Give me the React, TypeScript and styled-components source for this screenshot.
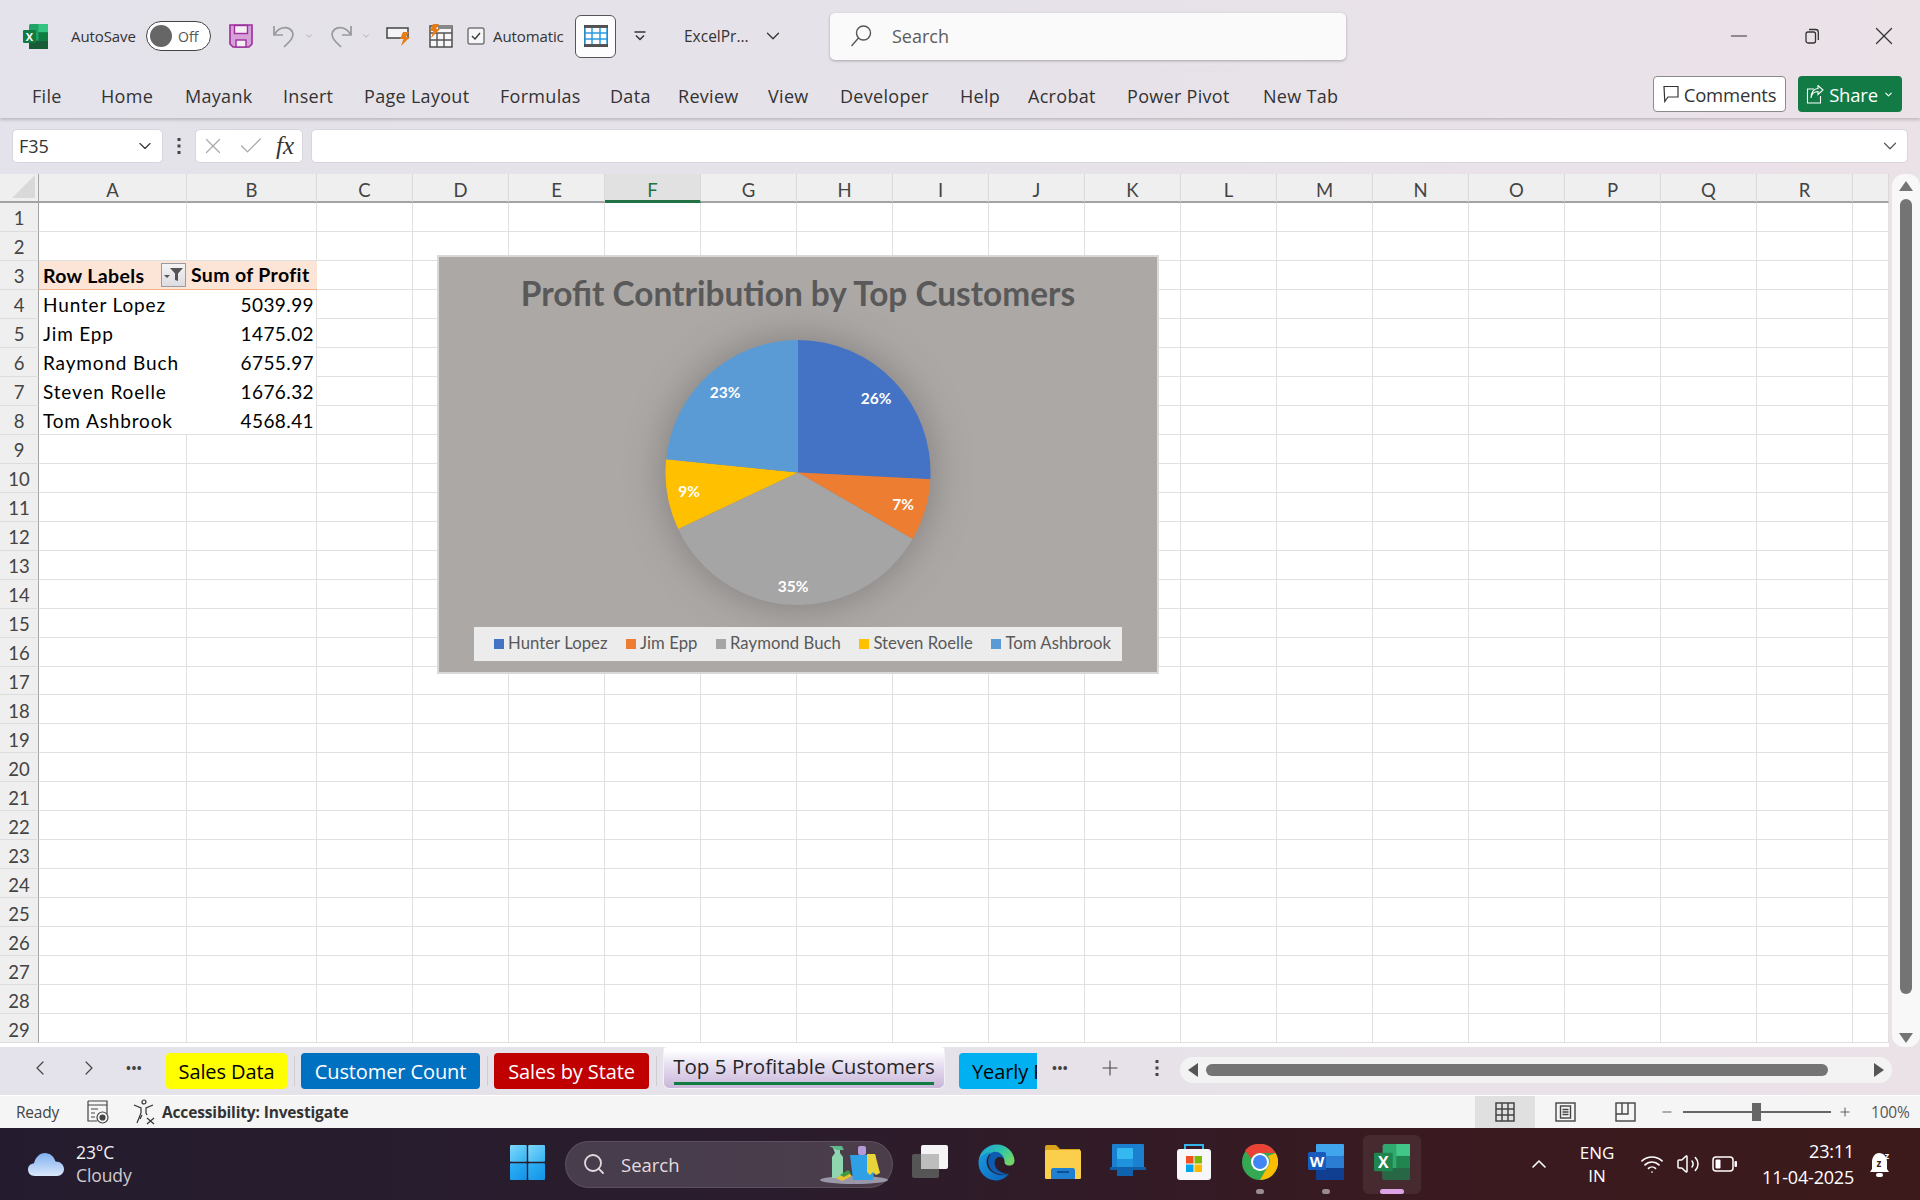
import React from 'react';
import styled, { createGlobalStyle } from 'styled-components';
import { Check, ChevronDown, ChevronLeft, ChevronRight, ChevronUp, Minus, Plus, Search, Volume2, Wifi, X } from 'lucide-react';

const UI_FONT = '"Open Sans", "Liberation Sans", sans-serif';
const CELL_FONT = 'Lato, "Open Sans", sans-serif';

const GlobalStyle = createGlobalStyle`
  html, body { margin: 0; padding: 0; }
  body { font-family: ${UI_FONT}; overflow: hidden; }
  * { box-sizing: border-box; }
`;

const Page = styled.div`
  width: 1920px;
  height: 1200px;
  display: flex;
  flex-direction: column;
  overflow: hidden;
  background: linear-gradient(90deg, #e4e2ea 0%, #e6e2e9 50%, #ebe2e8 100%);
  color: #262626;
`;

/* title bar */
const TitleBar = styled.header`
  height: 72px;
  display: flex;
  align-items: center;
  padding-left: 23px;
`;

const QatLabel = styled.span<{ $w: number; $left: number }>`
  width: ${({ $w }) => $w}px;
  margin-left: ${({ $left }) => $left}px;
  font-size: 15px;
  letter-spacing: -0.1px;
  white-space: nowrap;
  color: #333;
`;

const Toggle = styled.div`
  width: 65px;
  height: 30px;
  margin-left: 9px;
  border: 1.5px solid #444;
  border-radius: 15px;
  background: #fff;
  display: flex;
  align-items: center;
  padding-left: 3px;
  font-size: 14px;
  color: #555;
  gap: 6px;
  &:before {
    content: "";
    width: 22px;
    height: 22px;
    border-radius: 50%;
    background: #666;
  }
`;

const QatIcon = styled.span<{ $left: number }>`
  display: flex;
  margin-left: ${({ $left }) => $left}px;
  flex: none;
`;

const TableButton = styled.div`
  width: 41px;
  height: 43px;
  margin-left: 9px;
  border: 1px solid #555;
  border-radius: 6px;
  background: #fdfdfd;
  display: flex;
  align-items: center;
  justify-content: center;
  flex: none;
`;

const FileName = styled.span`
  width: 78px;
  margin-left: 38px;
  font-size: 15.5px;
  color: #333;
  white-space: nowrap;
`;

const SearchBox = styled.div`
  width: 516px;
  height: 47px;
  margin-left: 46px;
  background: #fafafa;
  border-radius: 5px;
  box-shadow: 0 1px 3px rgba(0, 0, 0, 0.28);
  display: flex;
  align-items: center;
  padding-left: 20px;
  gap: 20px;
  font-size: 18px;
  color: #5c5c5c;
  flex: none;
`;

const WindowControls = styled.div`
  display: flex;
  align-items: center;
  margin-left: auto;
  padding-right: 21px;
  color: #333;
`;

const RestoreSlot = styled.span`
  display: flex;
  margin: 0 49.5px 0 52.5px;
`;

/* ribbon tab row */
const RibbonRow = styled.nav`
  height: 46px;
  display: flex;
  align-items: flex-start;
  padding: 4px 18px 0 32px;
  box-shadow: 0 2px 3px rgba(0, 0, 0, 0.18);
  position: relative;
`;

const RibbonTab = styled.span<{ $w: number }>`
  width: ${({ $w }) => $w}px;
  flex: none;
  font-size: 18px;
  line-height: 40px;
  letter-spacing: 0.3px;
  color: #333;
  white-space: nowrap;
`;

const RibbonActions = styled.div`
  margin-left: auto;
  display: flex;
  gap: 12px;
`;

const CommentsButton = styled.div`
  width: 133px;
  height: 36px;
  background: #fff;
  border: 1px solid #8a8a8a;
  border-radius: 4px;
  display: flex;
  align-items: center;
  justify-content: center;
  gap: 5px;
  font-size: 18.5px;
  letter-spacing: -0.2px;
  color: #333;
`;

const ShareButton = styled.div`
  width: 104px;
  height: 36px;
  background: #117a45;
  border-radius: 4px;
  display: flex;
  align-items: center;
  justify-content: center;
  gap: 5px;
  font-size: 18.5px;
  letter-spacing: -0.2px;
  color: #fff;
`;

/* formula bar */
const FormulaBar = styled.div`
  height: 56px;
  display: flex;
  align-items: flex-start;
  padding: 11px 12px 0 12px;
`;

const FieldBox = styled.div<{ $w?: number }>`
  height: 34px;
  ${({ $w }) => ($w ? `width: ${$w}px; flex: none;` : 'flex: 1;')}
  background: #fff;
  border: 1px solid #d8d6dc;
  border-radius: 5px;
  display: flex;
  align-items: center;
`;

const NameBox = styled(FieldBox)`
  justify-content: space-between;
  padding: 0 7px 0 6px;
  font-size: 18px;
  color: #333;
`;

const FormulaDots = styled.div`
  width: 32px;
  flex: none;
  height: 34px;
  display: flex;
  align-items: center;
  justify-content: center;
  color: #444;
`;

const FormulaButtons = styled(FieldBox)`
  justify-content: space-between;
  padding: 0 8px 0 4px;
  margin-right: 8px;
`;

const FxLabel = styled.i`
  font-family: "Liberation Serif", serif;
  font-size: 25px;
  color: #333;
`;

const FormulaInput = styled(FieldBox)`
  justify-content: flex-end;
  padding-right: 6px;
  color: #555;
`;

/* worksheet */
const SheetArea = styled.div`
  height: 873px;
  display: flex;
`;

const GridWrap = styled.div`
  width: 1889px;
  height: 873px;
  background: #fff;
  position: relative;
  overflow: hidden;
`;

const Grid = styled.div`
  display: grid;
  grid-template-columns: 39px 148px 130px 96px repeat(15, 96px) 1fr;
  grid-template-rows: 29px repeat(29, 28.97px);
`;

const Corner = styled.div`
  background: #efefef;
  border-bottom: 2px solid #a3a3a3;
  border-right: 1px solid #a3a3a3;
  position: relative;
  &:after {
    content: "";
    position: absolute;
    right: 3px;
    bottom: 3px;
    border-style: solid;
    border-width: 0 0 23px 23px;
    border-color: transparent transparent #d9d9d9 transparent;
  }
`;

const ColHeader = styled.div<{ $active?: boolean }>`
  background: ${({ $active }) => ($active ? '#e1e1e1' : '#efefef')};
  border-right: 1px solid #d9d9d9;
  border-bottom: ${({ $active }) => ($active ? '3px solid #217346' : '2px solid #a3a3a3')};
  font-family: ${CELL_FONT};
  font-size: 18.5px;
  color: ${({ $active }) => ($active ? '#217346' : '#444')};
  display: flex;
  align-items: center;
  justify-content: center;
  padding-top: ${({ $active }) => ($active ? 5 : 4)}px;
`;

const RowHeader = styled.div`
  background: #efefef;
  border-right: 1px solid #a3a3a3;
  border-bottom: 1px solid #dcdcdc;
  font-family: ${CELL_FONT};
  font-size: 18.5px;
  color: #444;
  display: flex;
  align-items: center;
  justify-content: center;
  padding-top: 3px;
`;

const Cell = styled.div`
  border-right: 1px solid #e0e0e0;
  border-bottom: 1px solid #e0e0e0;
`;

const PivotHead = styled.div`
  background: #fce4d6;
  border-bottom: 1px solid #f4b084;
  font-family: ${CELL_FONT};
  font-weight: 700;
  font-size: 19.5px;
  letter-spacing: 0.35px;
  color: #000;
  display: flex;
  align-items: center;
  justify-content: space-between;
  padding-left: 4px;
  white-space: nowrap;
`;

const PivotLabelHead = styled.span`
  padding-top: 1px;
`;

const FilterButton = styled.span`
  width: 25px;
  height: 24px;
  margin-right: 1px;
  border: 1px solid #9a9aa2;
  background: linear-gradient(#f4f4f6, #dcdce2);
  display: flex;
  align-items: center;
  justify-content: center;
`;

const PivotLabel = styled.div<{ $last?: boolean }>`
  font-family: ${CELL_FONT};
  font-size: 19px;
  letter-spacing: 0.85px;
  color: #000;
  padding: 1px 0 0 4px;
  display: flex;
  align-items: center;
  white-space: nowrap;
  ${({ $last }) => ($last ? 'border-bottom: 1px solid #e0e0e0;' : '')}
`;

const PivotValue = styled(PivotLabel)`
  justify-content: flex-end;
  padding: 1px 2px 0 0;
  letter-spacing: 0.4px;
  border-right: 1px solid #e0e0e0;
`;

/* chart floats over the cells */
const Chart = styled.section`
  position: absolute;
  left: 437px;
  top: 81px;
  width: 722px;
  height: 419px;
  border: 2px solid #d9d9d9;
  background: #aca8a6;
  display: flex;
  flex-direction: column;
  align-items: center;
`;

const ChartTitle = styled.h2`
  margin: 0;
  height: 72px;
  line-height: 72px;
  font-family: ${CELL_FONT};
  font-weight: 700;
  font-size: 33.4px;
  color: #595959;
  white-space: nowrap;
`;

const PieLabel = styled.text`
  font-family: ${CELL_FONT};
  font-weight: 700;
  font-size: 15.5px;
  fill: #fff;
  text-anchor: middle;
  dominant-baseline: central;
`;

const PieGroup = styled.g`
  filter: drop-shadow(0 0 20px rgba(0, 0, 0, 0.26));
`;

const Legend = styled.div`
  width: 648px;
  height: 34px;
  flex: none;
  background: #ececec;
  display: flex;
  align-items: center;
  padding: 0 0 3px 20px;
  gap: 18.5px;
  font-family: ${CELL_FONT};
  font-size: 16.7px;
  letter-spacing: 0.05px;
  color: #595959;
`;

const LegendItem = styled.span<{ $color: string }>`
  display: flex;
  align-items: center;
  gap: 4px;
  white-space: nowrap;
  &:before {
    content: "";
    width: 10px;
    height: 10px;
    margin-top: 3px;
    background: ${({ $color }) => $color};
  }
`;

/* vertical scroll bar */
const VScroll = styled.div`
  width: 28px;
  margin-left: 3px;
  display: flex;
  flex-direction: column;
  align-items: center;
  background: #f8f8f8;
  border-radius: 12px;
  padding: 7px 1px 4px 0;
`;

const VThumb = styled.div`
  width: 12px;
  height: 795px;
  margin-top: 8px;
  background: #747474;
  border-radius: 6px;
`;

const VArrow = styled.div<{ $down?: boolean }>`
  width: 0;
  height: 0;
  border-left: 7px solid transparent;
  border-right: 7px solid transparent;
  ${({ $down }) => ($down ? 'border-top: 10px solid #747474; margin-top: auto;' : 'border-bottom: 10px solid #747474;')}
`;

/* sheet tabs */
const TabBar = styled.div`
  height: 48px;
  display: flex;
  align-items: flex-start;
`;

const TabNav = styled.div`
  width: 166px;
  flex: none;
  height: 42px;
  display: flex;
  align-items: center;
  padding-left: 28px;
  color: #444;
`;

const NavDots = styled.span`
  font-size: 13px;
  font-weight: 700;
  letter-spacing: 0.5px;
  color: #444;
`;

const SheetTab = styled.div<{ $w: number; $bg: string; $fg: string }>`
  width: ${({ $w }) => $w}px;
  height: 36px;
  margin-top: 6px;
  flex: none;
  background: ${({ $bg }) => $bg};
  color: ${({ $fg }) => $fg};
  border-radius: 4px;
  font-size: 20px;
  letter-spacing: -0.1px;
  display: flex;
  align-items: center;
  justify-content: center;
  white-space: nowrap;
  overflow: hidden;
`;

const ClippedTab = styled(SheetTab)`
  justify-content: flex-start;
  padding-left: 13px;
  border-radius: 4px 0 0 4px;
  margin-left: 14px;
`;

const TabSep = styled.span`
  width: 1px;
  height: 30px;
  margin: 9px 6px 0 7px;
  background: #cfcdd4;
  flex: none;
`;

const ActiveTab = styled.div`
  width: 282px;
  height: 42px;
  flex: none;
  background: linear-gradient(#ffffff 8%, #e6def0 45%, #c9b7da 100%);
  border-radius: 4px 4px 6px 6px;
  border: 1px solid #f3f0f6;
  border-top: none;
  padding: 4px 10px 0;
  display: flex;
  flex-direction: column;
  align-items: center;
  font-size: 20.5px;
  letter-spacing: 0.05px;
  line-height: 31px;
  white-space: nowrap;
  color: #262626;
`;

const ActiveUnderline = styled.span`
  width: 260px;
  height: 3px;
  background: #107c41;
  flex: none;
`;

const TabTools = styled.div`
  width: 143px;
  flex: none;
  height: 42px;
  display: flex;
  align-items: center;
  padding-left: 15px;
  gap: 30px;
  color: #444;
`;

const ToolDots = styled.span`
  display: flex;
  margin-left: 3px;
`;

const HScroll = styled.div`
  width: 712px;
  height: 26px;
  margin-top: 10px;
  flex: none;
  background: #f3f3f3;
  border-radius: 13px;
  display: flex;
  align-items: center;
  padding: 0 8px;
`;

const HThumb = styled.div`
  width: 622px;
  height: 12px;
  margin: 0 auto 0 8px;
  border-radius: 6px;
  background: #747474;
`;

const HArrow = styled.div<{ $right?: boolean }>`
  width: 0;
  height: 0;
  border-top: 7px solid transparent;
  border-bottom: 7px solid transparent;
  ${({ $right }) => ($right ? 'border-left: 10px solid #555;' : 'border-right: 10px solid #555;')}
`;

/* status bar */
const StatusBar = styled.footer`
  height: 33px;
  border-top: 1px solid #fff;
  background: #f5f5f5;
  display: flex;
  align-items: center;
  padding-left: 16px;
  font-size: 14px;
  color: #444;
`;

const StatusReady = styled.span`
  width: 71px;
  font-size: 15.5px;
  letter-spacing: -0.2px;
  flex: none;
`;

const AccessLabel = styled.b`
  margin-left: 5px;
  font-size: 15.5px;
  letter-spacing: -0.15px;
  color: #333;
`;

const StatusRight = styled.div`
  margin-left: auto;
  display: flex;
  align-items: center;
  height: 100%;
`;

const ViewButton = styled.div<{ $on?: boolean }>`
  width: 60px;
  height: 100%;
  display: flex;
  align-items: center;
  justify-content: center;
  background: ${({ $on }) => ($on ? '#e0e0e0' : 'transparent')};
`;

const ZoomTrack = styled.div`
  width: 148px;
  height: 2px;
  margin: 0 7px 0 9px;
  background: #666;
  position: relative;
`;

const ZoomThumb = styled.span`
  position: absolute;
  left: 69px;
  top: -8px;
  width: 9px;
  height: 18px;
  background: #666;
`;

const ZoomText = styled.span`
  width: 39px;
  margin: 0 10px 0 19px;
  font-size: 15.5px;
  letter-spacing: -0.2px;
  white-space: nowrap;
  color: #555;
`;

/* task bar */
const TaskBar = styled.div`
  height: 72px;
  display: flex;
  align-items: center;
  background: linear-gradient(90deg, #241c2e 0%, #2a1c2d 40%, #3a1a20 75%, #3c1a1b 100%);
  color: #fff;
`;

const Weather = styled.div`
  width: 494px;
  flex: none;
  display: flex;
  align-items: center;
  padding-left: 28px;
  gap: 12px;
`;

const WeatherText = styled.div`
  font-size: 17.5px;
  line-height: 23px;
  color: #f0f0f0;
  letter-spacing: -0.1px;
`;

const WeatherSub = styled.div`
  color: #cfcbd0;
`;

const AppSlot = styled.div<{ $active?: boolean }>`
  width: 66px;
  height: 59px;
  flex: none;
  position: relative;
  display: flex;
  align-items: center;
  justify-content: center;
  padding-bottom: 4px;
  border-radius: 5px;
  &:before {
    content: "";
    position: absolute;
    inset: 0 4px;
    border-radius: 6px;
    background: ${({ $active }) => ($active ? 'rgba(255,255,255,0.07)' : 'transparent')};
  }
`;

const RunningDot = styled.span<{ $active?: boolean }>`
  position: absolute;
  bottom: 0;
  left: 50%;
  transform: translateX(-50%);
  height: 5px;
  width: ${({ $active }) => ($active ? 24 : 8)}px;
  border-radius: 3px;
  background: ${({ $active }) => ($active ? '#dca3e6' : '#9a8c8c')};
`;

const TaskSearch = styled.div`
  width: 328px;
  height: 47px;
  flex: none;
  margin: 0 4px 0 5px;
  border-radius: 24px;
  background: rgba(255, 255, 255, 0.15);
  border: 1px solid rgba(255, 255, 255, 0.1);
  display: flex;
  align-items: center;
  padding-left: 16px;
  font-size: 18.5px;
  color: #e0dcdf;
  gap: 15px;
`;

const BucketArt = styled.span`
  margin-left: auto;
  margin-right: 2px;
  display: flex;
`;

const Tray = styled.div`
  margin-left: auto;
  display: flex;
  align-items: center;
  color: #fff;
`;

const EngBlock = styled.div`
  width: 60px;
  margin: 0 13px 0 16px;
  text-align: center;
  font-size: 17px;
  line-height: 23px;
`;

const TrayIcons = styled.div`
  display: flex;
  align-items: center;
  gap: 12px;
`;

const Clock = styled.div`
  width: 120px;
  margin: 0 14px 0 -4px;
  text-align: right;
  font-size: 18px;
  line-height: 26px;
  letter-spacing: -0.2px;
  white-space: nowrap;
`;

const TrayEnd = styled.span`
  width: 28px;
`;

/* icons */
const ExcelLogo = ({ size = 25 }: { size?: number }) => (
  <svg width={size} height={size} viewBox="0 0 25 25">
    <rect x="6" y="0" width="19" height="25" rx="1.5" fill="#21a366" />
    <rect x="15.5" y="0" width="9.5" height="8.3" fill="#33c481" />
    <rect x="15.5" y="8.3" width="9.5" height="8.4" fill="#107c41" />
    <rect x="6" y="16.7" width="19" height="8.3" fill="#185c37" />
    <rect x="0" y="6" width="13" height="13" rx="1" fill="#0f7b40" />
    <text x="6.5" y="16.5" fontSize="11" fontWeight="700" fontFamily="Open Sans" fill="#fff" textAnchor="middle">X</text>
  </svg>
);

const SaveIcon = () => (
  <svg width="24" height="24" viewBox="0 0 24 24">
    <path d="M1 1h22v19l-3 3H4l-3-3z" fill="#d8a0d8" stroke="#9c2f9c" strokeWidth="1.6" />
    <rect x="5.5" y="1.5" width="13" height="8" fill="#f4eef4" stroke="#9c2f9c" strokeWidth="1.4" />
    <rect x="7" y="16" width="10" height="7" fill="#f4eef4" stroke="#9c2f9c" strokeWidth="1.4" />
  </svg>
);

const UndoIcon = ({ flip }: { flip?: boolean }) => (
  <svg width="24" height="24" viewBox="0 0 24 24" fill="none" stroke="#999" strokeWidth="1.7" style={flip ? { transform: 'scaleX(-1)' } : undefined}>
    <path d="M2 2v9h9" />
    <path d="M2.5 10.5C6 4 14 1.500 18.500 5.500c4 3.500 2.500 8.500-1 12L12 23" />
  </svg>
);

const TinyChevron = () => <ChevronDown size={10} color="#a5a5a5" strokeWidth={2} style={{ marginLeft: 8 }} />;

const Bolt = ({ x, y, s = 1 }: { x: number; y: number; s?: number }) => (
  <path transform={`translate(${x} ${y}) scale(${s})`} d="M4 0h6L7 5h4L2 14l2.500-7H1z" fill="#e67c13" />
);

const RefreshSheetIcon = () => (
  <svg width="24" height="19" viewBox="0 0 24 19">
    <rect x="1" y="1" width="21" height="10" fill="#f4f4f6" stroke="#444" strokeWidth="1.500" />
    <Bolt x={13} y={5} />
  </svg>
);

const CalcIcon = () => (
  <svg width="24" height="24" viewBox="0 0 24 24">
    <rect x="1" y="2" width="22" height="21" fill="#f7f7f9" stroke="#444" strokeWidth="1.400" />
    <path d="M1 9h22M1 16h22M8 9v14M15 9v14" stroke="#555" strokeWidth="1.400" />
    <rect x="9" y="1" width="14" height="4" fill="#888" />
    <Bolt x={0} y={0} />
  </svg>
);

const CheckboxIcon = () => (
  <svg width="18" height="18" viewBox="0 0 18 18" fill="none">
    <rect x="1" y="1" width="16" height="16" rx="2" fill="#f6f6f8" stroke="#777" strokeWidth="1.500" />
    <path d="M5 9l3 3 5-6" stroke="#333" strokeWidth="1.300" />
  </svg>
);

const TableIcon = () => (
  <svg width="24" height="22" viewBox="0 0 24 22" fill="none">
    <rect x="0.500" y="0.500" width="23" height="21" stroke="#444" />
    <rect x="0.500" y="0.500" width="23" height="2.500" fill="#555" />
    <rect x="0.500" y="19" width="23" height="2.500" fill="#555" />
    <path d="M8 3v16M16 3v16M1 8h22M1 14h22" stroke="#2b9be0" strokeWidth="1.500" />
    <path d="M1 3v16M23 3v16" stroke="#2b9be0" strokeWidth="1.500" />
  </svg>
);

const CustomizeIcon = () => (
  <svg width="12" height="10" viewBox="0 0 12 10" fill="none" stroke="#333" strokeWidth="1.500">
    <path d="M0.500 1h11" />
    <path d="M2 4.500l4 4 4-4" />
  </svg>
);

const LensIcon = () => (
  <svg width="22" height="22" viewBox="0 0 22 22" fill="none" stroke="#555" strokeWidth="1.400">
    <circle cx="13.500" cy="8" r="7" />
    <path d="M8.500 13L1.500 21" />
  </svg>
);

const RestoreIcon = () => (
  <svg width="15" height="16" viewBox="0 0 15 16" fill="none" stroke="#333" strokeWidth="1.300">
    <rect x="1" y="4" width="9.500" height="11" rx="2" />
    <path d="M4 1.500h6.500c1.600 0 2.800 1.200 2.800 2.800V12" />
  </svg>
);

const CommentIcon = () => (
  <svg width="16" height="18" viewBox="0 0 16 18" fill="none" stroke="#333" strokeWidth="1.200">
    <path d="M1 1.500h14v10.500H5L1.800 16.500z" />
  </svg>
);

const ShareIcon = () => (
  <svg width="18" height="19" viewBox="0 0 18 19" fill="none" stroke="#fff" strokeWidth="1.100">
    <path d="M8 4H1.500v14h13V11" />
    <path d="M5 13c.5-4 3.500-6.500 7-6.500V9.500L17 5l-5-4.500v3C8 3.500 5 7.500 5 13z" />
  </svg>
);

const FunnelIcon = () => (
  <svg width="19" height="13" viewBox="0 0 19 13">
    <path d="M6 0h13l-5 5.500V13l-3-1V5.500z" fill="#555" />
    <path d="M0 7h6L3 10z" fill="#555" />
  </svg>
);

const VDots = () => (
  <svg width="4" height="16" viewBox="0 0 4 16" fill="currentColor">
    <rect x="0.500" y="0" width="3" height="3" />
    <rect x="0.500" y="6.500" width="3" height="3" />
    <rect x="0.500" y="13" width="3" height="3" />
  </svg>
);

const MacroRecIcon = () => (
  <svg width="22" height="24" viewBox="0 0 22 24" fill="none" stroke="#444" strokeWidth="1.200">
    <path d="M1 1h19v13M1 1v20h9" />
    <path d="M1 5h19M4 9h7M4 13h4M4 17h4" />
    <circle cx="15.500" cy="17.500" r="5.500" fill="#f5f5f5" />
    <circle cx="15.500" cy="17.500" r="2.500" fill="#444" />
  </svg>
);

const AccessIcon = () => (
  <svg width="24" height="26" viewBox="0 0 24 26" fill="none" stroke="#333" strokeWidth="1.200">
    <circle cx="11" cy="3" r="2" />
    <path d="M1 6l7 3v5l-4 10M20 6l-7 3v5l1 2M9 16l-2 4" />
    <path d="M14 19l7 6M21 19l-7 6" />
  </svg>
);

const NormalViewIcon = () => (
  <svg width="20" height="20" viewBox="0 0 20 20" fill="none" stroke="#444" strokeWidth="1.500">
    <rect x="1" y="1" width="18" height="18" />
    <path d="M7 1v18M13 1v18M1 7h18M1 13h18" />
  </svg>
);

const PageLayoutIcon = () => (
  <svg width="21" height="20" viewBox="0 0 21 20" fill="none" stroke="#444" strokeWidth="1.400">
    <rect x="1" y="1" width="19" height="18" />
    <rect x="5.500" y="4" width="10" height="12" />
    <path d="M7.500 7.500h6M7.500 10h6M7.500 12.500h6" />
  </svg>
);

const PageBreakIcon = () => (
  <svg width="21" height="20" viewBox="0 0 21 20" fill="none" stroke="#444" strokeWidth="1.400">
    <rect x="1" y="1" width="19" height="18" />
    <path d="M1 12h12V1M7 1v11" />
  </svg>
);

const CloudIcon = () => (
  <svg width="36" height="23" viewBox="0 0 36 23">
    <defs>
      <linearGradient id="cloudFill" x1="0" y1="0" x2="0" y2="1">
        <stop offset="0" stopColor="#7fb0ef" />
        <stop offset="1" stopColor="#dbe8fb" />
      </linearGradient>
    </defs>
    <path d="M7 23C2 23 0 19.500 0 16.500 0 13 2.500 10.500 6 10.500 7 5 11.500 0 17 0c5 0 9 3.500 10.500 8.500C32.500 8.500 36 12 36 16c0 4-3 7-7 7z" fill="url(#cloudFill)" />
  </svg>
);

const StartIcon = () => (
  <svg width="35" height="35" viewBox="0 0 35 35">
    <defs>
      <linearGradient id="winA" x1="0" y1="0" x2="1" y2="1">
        <stop offset="0" stopColor="#7fd8fb" />
        <stop offset="1" stopColor="#33b2f2" />
      </linearGradient>
      <linearGradient id="winB" x1="0" y1="0" x2="1" y2="1">
        <stop offset="0" stopColor="#2fb2f5" />
        <stop offset="1" stopColor="#1392e8" />
      </linearGradient>
    </defs>
    <rect x="0" y="0" width="16.800" height="16.800" rx="1" fill="url(#winA)" />
    <rect x="18.200" y="0" width="16.800" height="16.800" rx="1" fill="url(#winA)" />
    <rect x="0" y="18.200" width="16.800" height="16.800" rx="1" fill="url(#winB)" />
    <rect x="18.200" y="18.200" width="16.800" height="16.800" rx="1" fill="url(#winB)" />
  </svg>
);

const BucketIcon = () => (
  <svg width="70" height="42" viewBox="0 0 70 42">
    <ellipse cx="34" cy="37" rx="34" ry="4" fill="#9a98a8" />
    <path d="M13 5h7v5l3 4v21h-11V14l3-4z" fill="#8fd6b0" />
    <path d="M9 3h13l2 4h-7z" fill="#5fb88a" />
    <rect x="38" y="3" width="8" height="9" rx="2" fill="#b69ad8" />
    <path d="M30 12h26l-3 25H33z" fill="#2f9fe6" />
    <path d="M47 11h8l5 19-4 2-3-3-3 3-3-3z" fill="#e8d43a" />
    <path d="M16 35l12-6 4 4-10 5z" fill="#e7c22f" />
    <path d="M20 32l8-5 3 3-7 4z" fill="#3e9a3e" />
  </svg>
);

const TaskViewIcon = () => (
  <svg width="36" height="35" viewBox="0 0 36 35">
    <rect x="9" y="0" width="27" height="24" rx="2" fill="#f4f4f4" />
    <rect x="0" y="9" width="27" height="24" rx="2" fill="#555" />
    <rect x="9" y="9" width="18" height="15" fill="#bdbdbd" />
  </svg>
);

const EdgeIcon = () => (
  <svg width="37" height="37" viewBox="0 0 37 37">
    <defs>
      <linearGradient id="edgeA" x1="0" y1="0" x2="1" y2="0.600">
        <stop offset="0" stopColor="#1b9de2" />
        <stop offset="0.600" stopColor="#30c5a8" />
        <stop offset="1" stopColor="#71d66a" />
      </linearGradient>
      <linearGradient id="edgeB" x1="0" y1="0" x2="1" y2="1">
        <stop offset="0" stopColor="#1a9be0" />
        <stop offset="1" stopColor="#0a62bc" />
      </linearGradient>
    </defs>
    <path d="M.5 18C1 8 9 .5 19 .5c9 0 17 7 17.500 16 .2 3-2 5-5 5-4 0-5-2-5-4 0-5-4-8-9-8C9 9.500 1 12 .5 18z" fill="url(#edgeA)" />
    <path d="M.5 18C1 12 8 8 15 8c-5 2-7.500 7-6 13 1.500 6 8 11 17 10 2 0 4-1 5-1.500C28 34 23 36.500 18 36.500 8 36.500 0 28 .5 18z" fill="url(#edgeB)" />
    <path d="M15 8c5-1 11 2 11.500 9.500 0-3-4-5.500-7-4-4 2-4 9 1 13 3 2.500 7 3.500 10.500 3-4 2-11 2-16-2-6-5-7-15 0-19.500z" fill="#0d5cb0" />
  </svg>
);

const FolderIcon = () => (
  <svg width="37" height="34" viewBox="0 0 37 34">
    <path d="M1 2c0-1 .5-2 2-2h9l4 4h20v28c0 1-1 2-2 2H3c-1 0-2-1-2-2z" fill="#d9a21c" />
    <rect x="1" y="5" width="36" height="29" rx="1.500" fill="#fbcf4c" />
    <path d="M7 34V25c0-1 1-2 2-2h20c1 0 2 1 2 2v9z" fill="#1f7fd0" />
    <rect x="13" y="26" width="12" height="2" fill="#0b4f94" />
  </svg>
);

const DeviceIcon = () => (
  <svg width="36" height="36" viewBox="0 0 36 36">
    <rect x="2" y="0" width="32" height="24" rx="1" fill="#1a80cf" />
    <rect x="0" y="23" width="36" height="3" fill="#0e5fa8" />
    <rect x="7" y="4" width="16" height="11" rx="1" fill="#33b8f0" />
    <rect x="7" y="15" width="16" height="8" fill="#1f93de" />
    <rect x="7" y="23" width="16" height="9" fill="#0e62ae" />
  </svg>
);

const StoreIcon = () => (
  <svg width="36" height="36" viewBox="0 0 36 36">
    <path d="M9 5V1h18v4" fill="none" stroke="#36b4ec" strokeWidth="2" />
    <rect x="1" y="5" width="34" height="31" rx="3" fill="#f7f7f7" />
    <rect x="10" y="12" width="7.500" height="7.500" fill="#f25022" />
    <rect x="18.500" y="12" width="7.500" height="7.500" fill="#7fba00" />
    <rect x="10" y="20.500" width="7.500" height="7.500" fill="#00a4ef" />
    <rect x="18.500" y="20.500" width="7.500" height="7.500" fill="#ffb900" />
  </svg>
);

const ChromeIcon = () => (
  <svg width="36" height="36" viewBox="0 0 36 36">
    <circle cx="18" cy="18" r="18" fill="#34a853" />
    <path d="M18 0a18 18 0 0 1 15.600 9H18a9 9 0 0 0-8.400 5.700L3 6.500A18 18 0 0 1 18 0z" fill="#ea4335" />
    <path d="M33.600 9A18 18 0 0 1 18 36l7.800-13.500A9 9 0 0 0 26 12z" fill="#fbbc04" />
    <circle cx="18" cy="18" r="9" fill="#fff" />
    <circle cx="18" cy="18" r="7" fill="#4285f4" />
  </svg>
);

const WordIcon = () => (
  <svg width="36" height="36" viewBox="0 0 36 36">
    <rect x="8" y="0" width="28" height="12" rx="1" fill="#41a5ee" />
    <rect x="8" y="12" width="28" height="12" fill="#2b7cd3" />
    <rect x="8" y="24" width="28" height="12" rx="1" fill="#103f91" />
    <rect x="0" y="8" width="18" height="18" rx="1.500" fill="#185abd" />
    <text x="9" y="22.500" fontSize="15" fontWeight="700" fontFamily="Open Sans" fill="#fff" textAnchor="middle">W</text>
  </svg>
);

const BatteryIcon = () => (
  <svg width="26" height="16" viewBox="0 0 26 16">
    <rect x="1" y="1" width="20" height="14" rx="3" fill="none" stroke="#fff" strokeWidth="1.500" />
    <rect x="3.500" y="3.500" width="5" height="9" rx="1" fill="#fff" />
    <rect x="22.500" y="5" width="2.500" height="6" rx="1" fill="#fff" />
  </svg>
);

const BellIcon = () => (
  <svg width="24" height="30" viewBox="0 0 24 30">
    <path d="M11 4c5 0 8 4 8 9v7l2 3H2l2-3v-7c0-5 3-9 7-9z" fill="#fff" />
    <rect x="8" y="24" width="7" height="4" rx="2" fill="#fff" />
    <text x="11" y="18" fontSize="10" fontWeight="700" fontFamily="Open Sans" fill="#3c1a1b" textAnchor="middle">z</text>
    <text x="19" y="10" fontSize="9" fontWeight="700" fontFamily="Open Sans" fill="#fff" textAnchor="middle">z</text>
  </svg>
);

/* data */
const RIBBON_TABS: [string, number][] = [
  ['File', 69], ['Home', 84], ['Mayank', 98], ['Insert', 81], ['Page Layout', 136], ['Formulas', 110], ['Data', 68],
  ['Review', 90], ['View', 72], ['Developer', 120], ['Help', 68], ['Acrobat', 99], ['Power Pivot', 136], ['New Tab', 80],
];

const COLUMNS = 'ABCDEFGHIJKLMNOPQR'.split('');

const CUSTOMERS = [
  { name: 'Hunter Lopez', profit: 5039.99, color: '#4472c4', pct: '26%', label: [437, 69] },
  { name: 'Jim Epp', profit: 1475.02, color: '#ed7d31', pct: '7%', label: [464, 175] },
  { name: 'Raymond Buch', profit: 6755.97, color: '#a5a5a5', pct: '35%', label: [354, 257] },
  { name: 'Steven Roelle', profit: 1676.32, color: '#ffc000', pct: '9%', label: [250, 162] },
  { name: 'Tom Ashbrook', profit: 4568.41, color: '#5b9bd5', pct: '23%', label: [286, 63] },
];

const PIE_CX = 359;
const PIE_CY = 143.5;
const PIE_R = 132.5;
const PIE_TOTAL = CUSTOMERS.reduce((sum, c) => sum + c.profit, 0);

function polar(fraction: number) {
  const a = fraction * Math.PI * 2 - Math.PI / 2;
  return `${PIE_CX + PIE_R * Math.cos(a)} ${PIE_CY + PIE_R * Math.sin(a)}`;
}

function PieChart() {
  let start = 0;
  return (
    <svg width="718" height="298" viewBox="0 0 718 298" style={{ flex: 'none', overflow: 'visible' }}>
      <PieGroup>
        {CUSTOMERS.map((c) => {
          const frac = c.profit / PIE_TOTAL;
          const d = `M${PIE_CX} ${PIE_CY}L${polar(start)}A${PIE_R} ${PIE_R} 0 ${frac > 0.5 ? 1 : 0} 1 ${polar(start + frac)}Z`;
          start += frac;
          return <path key={c.name} d={d} fill={c.color} />;
        })}
      </PieGroup>
      {CUSTOMERS.map((c) => (
        <PieLabel key={c.name} x={c.label[0]} y={c.label[1]}>{c.pct}</PieLabel>
      ))}
    </svg>
  );
}

function rowCells(row: number) {
  const blanks = (from: number) => (
    <>
      {COLUMNS.slice(from).map((c) => <Cell key={c} />)}
      <Cell />
    </>
  );
  if (row === 3) {
    return (
      <>
        <PivotHead><PivotLabelHead>Row Labels</PivotLabelHead><FilterButton><FunnelIcon /></FilterButton></PivotHead>
        <PivotHead>Sum of Profit</PivotHead>
        {blanks(2)}
      </>
    );
  }
  if (row >= 4 && row <= 8) {
    const customer = CUSTOMERS[row - 4];
    return (
      <>
        <PivotLabel $last={row === 8}>{customer.name}</PivotLabel>
        <PivotValue $last={row === 8}>{customer.profit.toFixed(2)}</PivotValue>
        {blanks(2)}
      </>
    );
  }
  return blanks(0);
}

export default function App() {
  return (
    <Page>
      <GlobalStyle />
      <TitleBar>
        <ExcelLogo />
        <QatLabel $w={66} $left={23}>AutoSave</QatLabel>
        <Toggle>Off</Toggle>
        <QatIcon $left={18}><SaveIcon /></QatIcon>
        <QatIcon $left={19}><UndoIcon /></QatIcon>
        <TinyChevron />
        <QatIcon $left={15}><UndoIcon flip /></QatIcon>
        <TinyChevron />
        <QatIcon $left={15}><RefreshSheetIcon /></QatIcon>
        <QatIcon $left={19}><CalcIcon /></QatIcon>
        <QatIcon $left={14}><CheckboxIcon /></QatIcon>
        <QatLabel $w={73} $left={8}>Automatic</QatLabel>
        <TableButton><TableIcon /></TableButton>
        <QatIcon $left={18}><CustomizeIcon /></QatIcon>
        <FileName>ExcelPr...</FileName>
        <ChevronDown size={22} color="#333" strokeWidth={1.4} />
        <SearchBox><LensIcon />Search</SearchBox>
        <WindowControls>
          <Minus size={26} strokeWidth={1} />
          <RestoreSlot><RestoreIcon /></RestoreSlot>
          <X size={30} strokeWidth={1} />
        </WindowControls>
      </TitleBar>

      <RibbonRow>
        {RIBBON_TABS.map(([label, w]) => <RibbonTab key={label} $w={w}>{label}</RibbonTab>)}
        <RibbonActions>
          <CommentsButton><CommentIcon />Comments</CommentsButton>
          <ShareButton><ShareIcon />Share<ChevronDown size={11} strokeWidth={2.5} /></ShareButton>
        </RibbonActions>
      </RibbonRow>

      <FormulaBar>
        <NameBox $w={151}>F35<ChevronDown size={20} strokeWidth={1.4} /></NameBox>
        <FormulaDots><VDots /></FormulaDots>
        <FormulaButtons $w={108}>
          <X size={26} strokeWidth={1.1} color="#a8a8a8" />
          <Check size={28} strokeWidth={1.1} color="#a8a8a8" />
          <FxLabel>fx</FxLabel>
        </FormulaButtons>
        <FormulaInput><ChevronDown size={22} strokeWidth={1.3} /></FormulaInput>
      </FormulaBar>

      <SheetArea>
        <GridWrap>
          <Grid>
            <Corner />
            {COLUMNS.map((c) => <ColHeader key={c} $active={c === 'F'}>{c}</ColHeader>)}
            <ColHeader />
            {Array.from({ length: 29 }, (_, i) => (
              <React.Fragment key={i}>
                <RowHeader>{i + 1}</RowHeader>
                {rowCells(i + 1)}
              </React.Fragment>
            ))}
          </Grid>
          <Chart>
            <ChartTitle>Profit Contribution by Top Customers</ChartTitle>
            <PieChart />
            <Legend>
              {CUSTOMERS.map((c) => <LegendItem key={c.name} $color={c.color}>{c.name}</LegendItem>)}
            </Legend>
          </Chart>
        </GridWrap>
        <VScroll>
          <VArrow />
          <VThumb />
          <VArrow $down />
        </VScroll>
      </SheetArea>

      <TabBar>
        <TabNav>
          <ChevronLeft size={24} strokeWidth={1.2} />
          <ChevronRight size={24} strokeWidth={1.2} style={{ marginLeft: 25 }} />
          <NavDots style={{ marginLeft: 25 }}>•••</NavDots>
        </TabNav>
        <SheetTab $w={121} $bg="#ffff00" $fg="#000">Sales Data</SheetTab>
        <TabSep />
        <SheetTab $w={179} $bg="#0070c0" $fg="#fff">Customer Count</SheetTab>
        <TabSep />
        <SheetTab $w={155} $bg="#c00000" $fg="#fff">Sales by State</SheetTab>
        <TabSep />
        <ActiveTab>Top 5 Profitable Customers<ActiveUnderline /></ActiveTab>
        <ClippedTab $w={78} $bg="#00b0f0" $fg="#000">Yearly Profit</ClippedTab>
        <TabTools>
          <NavDots>•••</NavDots>
          <Plus size={24} strokeWidth={1.1} />
          <ToolDots><VDots /></ToolDots>
        </TabTools>
        <HScroll>
          <HArrow />
          <HThumb />
          <HArrow $right />
        </HScroll>
      </TabBar>

      <StatusBar>
        <StatusReady>Ready</StatusReady>
        <MacroRecIcon />
        <QatIcon $left={24}><AccessIcon /></QatIcon>
        <AccessLabel>Accessibility: Investigate</AccessLabel>
        <StatusRight>
          <ViewButton $on><NormalViewIcon /></ViewButton>
          <ViewButton><PageLayoutIcon /></ViewButton>
          <ViewButton><PageBreakIcon /></ViewButton>
          <Minus size={14} strokeWidth={1.4} style={{ marginLeft: 5 }} />
          <ZoomTrack><ZoomThumb /></ZoomTrack>
          <Plus size={14} strokeWidth={1.4} />
          <ZoomText>100%</ZoomText>
        </StatusRight>
      </StatusBar>

      <TaskBar>
        <Weather>
          <CloudIcon />
          <WeatherText>23°C<WeatherSub>Cloudy</WeatherSub></WeatherText>
        </Weather>
        <AppSlot><StartIcon /></AppSlot>
        <TaskSearch>
          <Search size={24} strokeWidth={1.8} />
          Search
          <BucketArt><BucketIcon /></BucketArt>
        </TaskSearch>
        <AppSlot><TaskViewIcon /></AppSlot>
        <AppSlot><EdgeIcon /></AppSlot>
        <AppSlot><FolderIcon /></AppSlot>
        <AppSlot><DeviceIcon /></AppSlot>
        <AppSlot><StoreIcon /></AppSlot>
        <AppSlot><ChromeIcon /><RunningDot /></AppSlot>
        <AppSlot><WordIcon /><RunningDot /></AppSlot>
        <AppSlot $active><ExcelLogo size={36} /><RunningDot $active /></AppSlot>
        <Tray>
          <ChevronUp size={24} strokeWidth={1.6} />
          <EngBlock>ENG<br />IN</EngBlock>
          <TrayIcons>
            <Wifi size={24} strokeWidth={1.7} />
            <Volume2 size={24} strokeWidth={1.5} />
            <BatteryIcon />
          </TrayIcons>
          <Clock>23:11<br />11-04-2025</Clock>
          <BellIcon />
          <TrayEnd />
        </Tray>
      </TaskBar>
    </Page>
  );
}
